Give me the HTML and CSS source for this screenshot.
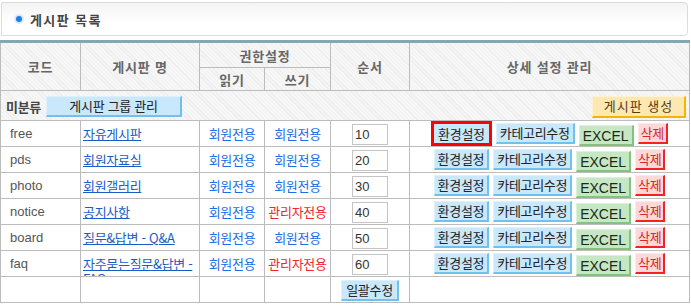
FILE: index.html
```html
<!DOCTYPE html>
<html lang="ko">

<head>
  <meta charset="UTF-8">
  <meta name="viewport" content="width=device-width, initial-scale=1.0">
  <title>게시판 목록</title>
  <link rel="stylesheet" href="styles.css">
</head>

<body>

  <div class="wrap">
    <div class="title-box">
      <span class="dot"></span>
      <h2 class="title">게시판 목록</h2>
    </div>

    <table class="board-table">
      <colgroup>
        <col style="width: 80px;">
        <col style="width: 119px;">
        <col style="width: 65px;">
        <col style="width: 66px;">
        <col style="width: 79px;">
        <col>
      </colgroup>
      <thead>
        <tr class="head-1">
          <th rowspan="2">코드</th>
          <th rowspan="2">게시판 명</th>
          <th colspan="2">권한설정</th>
          <th rowspan="2">순서</th>
          <th rowspan="2">상세 설정 관리</th>
        </tr>
        <tr class="head-2">
          <th>읽기</th>
          <th>쓰기</th>
        </tr>
      </thead>
      <tbody>
        <tr class="group-row">
          <td colspan="6">
            <div class="group-bar">
              <span class="group-name">미분류</span>
              <span class="btn btn-blue btn-group">게시판 그룹 관리</span>
              <span class="btn btn-yellow btn-create">게시판 생성</span>
            </div>
          </td>
        </tr>

        <tr>
          <td class="code">free</td>
          <td class="name"><div><a href="#">자유게시판</a></div></td>
          <td class="perm">회원전용</td>
          <td class="perm">회원전용</td>
          <td class="order"><input type="text" value="10"></td>
          <td class="actions">
            <span class="btn btn-blue btn-active">환경설정</span>
            <span class="btn btn-blue">카테고리수정</span>
            <span class="btn btn-green">EXCEL</span>
            <span class="btn btn-red">삭제</span>
          </td>
        </tr>
        <tr>
          <td class="code">pds</td>
          <td class="name"><div><a href="#">회원자료실</a></div></td>
          <td class="perm">회원전용</td>
          <td class="perm">회원전용</td>
          <td class="order"><input type="text" value="20"></td>
          <td class="actions">
            <span class="btn btn-blue">환경설정</span>
            <span class="btn btn-blue">카테고리수정</span>
            <span class="btn btn-green">EXCEL</span>
            <span class="btn btn-red">삭제</span>
          </td>
        </tr>
        <tr>
          <td class="code">photo</td>
          <td class="name"><div><a href="#">회원갤러리</a></div></td>
          <td class="perm">회원전용</td>
          <td class="perm">회원전용</td>
          <td class="order"><input type="text" value="30"></td>
          <td class="actions">
            <span class="btn btn-blue">환경설정</span>
            <span class="btn btn-blue">카테고리수정</span>
            <span class="btn btn-green">EXCEL</span>
            <span class="btn btn-red">삭제</span>
          </td>
        </tr>
        <tr>
          <td class="code">notice</td>
          <td class="name"><div><a href="#">공지사항</a></div></td>
          <td class="perm">회원전용</td>
          <td class="perm admin">관리자전용</td>
          <td class="order"><input type="text" value="40"></td>
          <td class="actions">
            <span class="btn btn-blue">환경설정</span>
            <span class="btn btn-blue">카테고리수정</span>
            <span class="btn btn-green">EXCEL</span>
            <span class="btn btn-red">삭제</span>
          </td>
        </tr>
        <tr>
          <td class="code">board</td>
          <td class="name"><div><a href="#">질문&amp;답변 - Q&amp;A</a></div></td>
          <td class="perm">회원전용</td>
          <td class="perm">회원전용</td>
          <td class="order"><input type="text" value="50"></td>
          <td class="actions">
            <span class="btn btn-blue">환경설정</span>
            <span class="btn btn-blue">카테고리수정</span>
            <span class="btn btn-green">EXCEL</span>
            <span class="btn btn-red">삭제</span>
          </td>
        </tr>
        <tr>
          <td class="code">faq</td>
          <td class="name"><div><a href="#">자주묻는질문&amp;답변 - FAQ</a></div></td>
          <td class="perm">회원전용</td>
          <td class="perm admin">관리자전용</td>
          <td class="order"><input type="text" value="60"></td>
          <td class="actions">
            <span class="btn btn-blue">환경설정</span>
            <span class="btn btn-blue">카테고리수정</span>
            <span class="btn btn-green">EXCEL</span>
            <span class="btn btn-red">삭제</span>
          </td>
        </tr>

        <tr class="foot-row">
          <td></td>
          <td></td>
          <td></td>
          <td></td>
          <td class="order"><span class="btn btn-blue">일괄수정</span></td>
          <td></td>
        </tr>
      </tbody>
    </table>
  </div>

</body>

</html>
```

FILE: styles.css
```css
body {
  margin: 0;
  font-family: "Noto Sans CJK KR", "Liberation Sans", sans-serif;
  font-size: 13px;
  letter-spacing: -0.3px;
  color: #333;
}

.wrap {
  width: 690px;
  padding-top: 2px;
}

.title-box {
  display: flex;
  align-items: center;
  height: 32px;
  margin: 0 2px 0 1px;
  border: 1px solid #dcdcdc;
  border-radius: 0 4px 4px 0;
  background: linear-gradient(#f3f3f3, #fff 60%);
}

.dot {
  width: 6px;
  height: 6px;
  margin: 0 8px 0 14px;
  border-radius: 50%;
  background: #1f7ee8;
  box-shadow: 0 0 0 2px #d9e9fb;
}

.title {
  margin: 0;
  font-size: 13px;
  font-weight: bold;
  color: #444;
  letter-spacing: 1.4px;
}

.board-table {
  width: 690px;
  margin-top: 4px;
  border-collapse: collapse;
  table-layout: fixed;
  border-top: 3px solid #82a9b3;
}

.board-table th,
.board-table td {
  border: 1px solid #bcbcbc;
  padding: 0;
}

.board-table th {
  font-weight: bold;
  color: #666;
  letter-spacing: 0.8px;
  background: repeating-linear-gradient(45deg, #ececec 0 1px, #f8f8f8 1px 3px);
}

.head-1 th {
  height: 24px;
}

.head-2 th {
  height: 22px;
}

.board-table tbody tr td {
  height: 25px;
}

.board-table tbody tr.group-row td {
  height: 29px;
  background: repeating-linear-gradient(45deg, #ececec 0 1px, #f8f8f8 1px 3px);
}

.group-bar {
  display: flex;
  align-items: center;
  padding: 2px 3px 0 5px;
}

.group-name {
  font-weight: bold;
  color: #444;
  margin-right: 5px;
}

.btn-group {
  width: 136px;
  text-align: center;
}

.btn-create {
  margin-left: auto;
  width: 94px;
  text-align: center;
}

.code {
  padding-left: 9px !important;
  font-family: "Liberation Sans", sans-serif;
  font-size: 13px;
  letter-spacing: 0;
  color: #555;
}

.name div {
  height: 24px;
  overflow: hidden;
  line-height: 15px;
  padding: 4px 2px 0;
  box-sizing: border-box;
}

.name a {
  color: #1b5cc4;
  text-decoration: underline;
}

.perm {
  text-align: center;
  color: #1a6ee8;
}

.perm.admin {
  color: #f0252f;
}

.order {
  text-align: center;
}

.order input {
  width: 36px;
  height: 21px;
  box-sizing: border-box;
  margin: 1px 0 0;
  padding: 0 2px;
  border: 1px solid #c4c4c4;
  font-family: "Liberation Sans", sans-serif;
  font-size: 13px;
  color: #333;
  vertical-align: middle;
}

.actions {
  text-align: center;
  white-space: nowrap;
  font-size: 0;
}

.btn {
  display: inline-block;
  box-sizing: border-box;
  height: 21px;
  line-height: 18px;
  padding: 0 3px;
  border: 1px solid;
  border-right-width: 2px;
  border-bottom-width: 2px;
  font-size: 13px;
  color: #222;
  vertical-align: middle;
}

.actions .btn {
  margin: 0 2px;
}

.btn-blue {
  background: #c9e8fb;
  border-color: #dcf0fd #6fc2f0 #6fc2f0 #dcf0fd;
}

.btn-yellow {
  height: 22px;
  background: #fde8b2;
  border-color: #fef2d2 #f4b400 #f4b400 #fef2d2;
  color: #5a3a12;
  letter-spacing: 1px;
}

.btn-green {
  background: #c6e7c3;
  border-color: #dcf1da #84c27f #84c27f #dcf1da;
  font-family: "Liberation Sans", sans-serif;
  font-size: 14px;
  letter-spacing: 0;
  line-height: 20px;
  margin: 4px 2px 0 !important;
  color: #1a2a1a;
}

.btn-red {
  background: #fdd8d8;
  border-color: #fde8e8 #f52222 #f52222 #fde8e8;
  color: #d8262a;
  padding: 0 2px;
}

.btn-active {
  height: 25px;
  border: 3px solid #f00;
  line-height: 19px;
  padding: 0 4px;
}

.foot-row .btn {
  margin-top: 2px;
  padding: 0 4px;
}
```
